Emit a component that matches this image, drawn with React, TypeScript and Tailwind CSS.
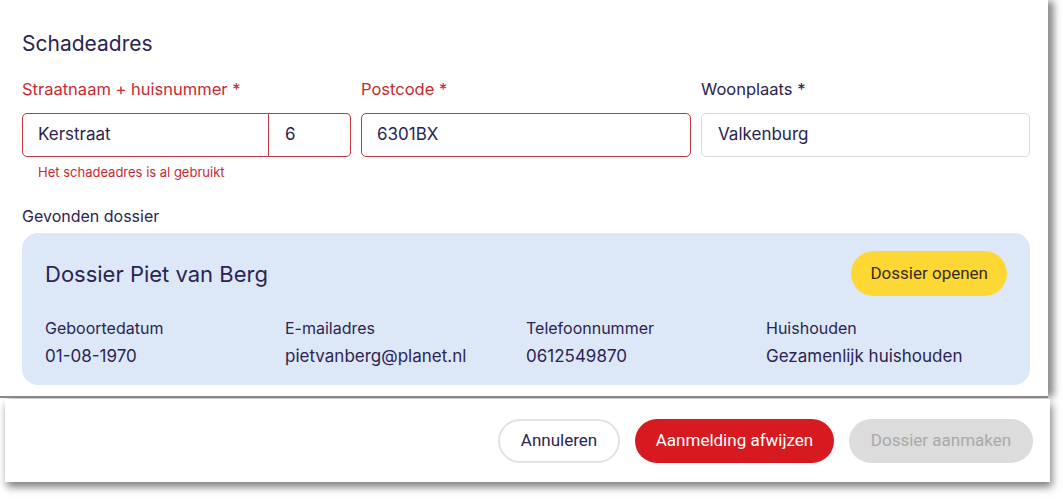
const fieldLabel = "text-[16.5px] leading-5"

const DetailColumn = ({ label, value }: { label: string; value: string }) => (
  <div className="flex flex-col gap-[6px]">
    <span className="text-[16px] leading-5">{label}</span>
    <span className="text-[17px] leading-6">{value}</span>
  </div>
)

const App = () => {
  return (
    <main
      className="relative h-[499px] w-[1063px] overflow-hidden bg-white text-[#2b2452]"
      style={{ fontFamily: "Inter, 'Noto Sans', sans-serif" }}>
      <section className="h-[398px] w-[1048px] border-b-2 border-[#8a8a8a] bg-white pl-[22px] pr-[18px] pt-[32px] shadow-[7px_0_7px_-1px_rgba(0,0,0,0.45)]">
        <h2 className="text-[21px] leading-6">Schadeadres</h2>

        <div className="mt-[23px] flex gap-[10px]">
          <div className="flex w-[329px] flex-col">
            <label className={`${fieldLabel} text-[#c62a32]`}>Straatnaam + huisnummer *</label>
            <div className="mt-[14px] flex h-[44px]">
              <div className="flex w-[247px] items-center rounded-l-[5px] border border-[#c0393f] px-[15px] text-[17px]">
                Kerstraat
              </div>
              <div className="flex flex-1 items-center rounded-r-[5px] border border-l-0 border-[#c0393f] px-[16px] text-[17px]">
                6
              </div>
            </div>
            <span className="mt-[7px] pl-[16px] text-[13px] leading-4 text-[#c62a32]">Het schadeadres is al gebruikt</span>
          </div>

          <div className="flex w-[330px] flex-col">
            <label className={`${fieldLabel} text-[#c62a32]`}>Postcode *</label>
            <div className="mt-[14px] flex h-[44px] items-center rounded-[5px] border border-[#c0393f] px-[15px] text-[17px]">
              6301BX
            </div>
          </div>

          <div className="flex w-[329px] flex-col">
            <label className={fieldLabel}>Woonplaats *</label>
            <div className="mt-[14px] flex h-[44px] items-center rounded-[5px] border border-[#d9d9d9] px-[16px] text-[17px]">
              Valkenburg
            </div>
          </div>
        </div>

        <p className="mt-[26px] text-[16px] leading-5">Gevonden dossier</p>

        <div className="mt-[7px] h-[152px] w-[1008px] rounded-[16px] bg-[#dce8f7] pl-[23px] pr-[23px] pt-[18px]">
          <div className="flex items-center justify-between">
            <h3 className="text-[22px] leading-7">Dossier Piet van Berg</h3>
            <button
              className="h-[45px] rounded-full bg-[#fdd835] px-[19px] text-[17px] text-[#3a2b22]"
              style={{ fontFamily: "Roboto, sans-serif" }}>
              Dossier openen
            </button>
          </div>
          <div className="mt-[22px] grid grid-cols-[240px_241px_240px_1fr]">
            <DetailColumn label="Geboortedatum" value="01-08-1970" />
            <DetailColumn label="E-mailadres" value="pietvanberg@planet.nl" />
            <DetailColumn label="Telefoonnummer" value="0612549870" />
            <DetailColumn label="Huishouden" value="Gezamenlijk huishouden" />
          </div>
        </div>
      </section>

      <footer className="ml-[5px] mt-[1px] flex h-[83px] w-[1045px] items-center justify-end gap-[15px] bg-white pr-[17px] shadow-[2px_5px_8px_rgba(0,0,0,0.5)]">
        <button
          className="h-[44px] w-[122px] rounded-full border-2 border-[#e2e2e2] text-[17px] text-[#2b2452]"
          style={{ fontFamily: "Roboto, sans-serif" }}>
          Annuleren
        </button>
        <button
          className="h-[44px] w-[199px] rounded-full bg-[#d71920] text-[17px] text-white"
          style={{ fontFamily: "Roboto, sans-serif" }}>
          Aanmelding afwijzen
        </button>
        <button
          className="h-[44px] w-[184px] rounded-full bg-[#dcdcdc] text-[17px] text-[#a9a9a9]"
          style={{ fontFamily: "Roboto, sans-serif" }}>
          Dossier aanmaken
        </button>
      </footer>
    </main>
  )
}

export default App
